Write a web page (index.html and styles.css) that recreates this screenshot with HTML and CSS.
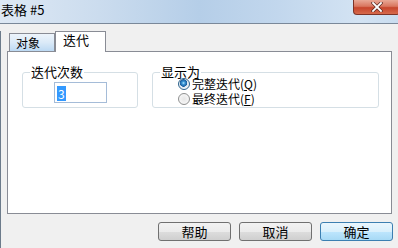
FILE: index.html
```html
<!DOCTYPE html>
<html lang="zh-CN">
<head>
  <meta charset="UTF-8" />
  <title>表格 #5</title>
  <link rel="stylesheet" href="styles.css">
</head>
<body>
  <div class="titlebar">
    <span class="title">表格 #5</span>
    <span class="close">
      <svg width="12" height="10" viewBox="0 0 12 10">
        <path d="M2 1 L10 9 M10 1 L2 9" stroke="#5a2a22" stroke-width="3.2" stroke-linecap="square" />
        <path d="M2 1 L10 9 M10 1 L2 9" stroke="#fff" stroke-width="1.8" stroke-linecap="square" />
      </svg>
    </span>
  </div>

  <div class="client">
    <div class="tabs">
      <div class="tab">对象</div>
      <div class="tab active">迭代</div>
    </div>

    <div class="panel">
      <fieldset class="group group-count">
        <legend>迭代次数</legend>
        <div class="group-body">
          <div class="field"><span class="sel">3</span></div>
        </div>
      </fieldset>

      <fieldset class="group group-show">
        <legend>显示为</legend>
        <div class="group-body">
          <label class="radio"><span class="dot checked"></span>完整迭代(<u>Q</u>)</label>
          <label class="radio"><span class="dot"></span>最终迭代(<u>F</u>)</label>
        </div>
      </fieldset>
    </div>

    <div class="buttons">
      <button class="btn">帮助</button>
      <button class="btn">取消</button>
      <button class="btn btn-default">确定</button>
    </div>
  </div>
</body>
</html>
```

FILE: styles.css
```css
body {
  margin: 0;
  width: 398px;
  height: 248px;
  overflow: hidden;
  background: #f0f0f0;
  font-family: "Noto Sans CJK SC", "DejaVu Sans", sans-serif;
  font-size: 12px;
  color: #000;
}
.titlebar {
  display: flex;
  justify-content: space-between;
  align-items: flex-start;
  height: 23px;
  border-bottom: 1px solid #7a8899;
  background: linear-gradient(to right, #dde8f4 0%, #cbdcee 25%, #b5cee8 50%, #c2d7ed 70%, #d3e3f3 90%, #c9dcef 100%);
}
.title {
  padding-left: 1px;
  line-height: 20px;
  font-size: 13px;
}
.close {
  display: flex;
  align-items: center;
  justify-content: center;
  width: 45px;
  height: 14px;
  margin-right: -2px;
  border: 1px solid #7d3327;
  border-top: 0;
  border-radius: 0 0 4px 4px;
  background: linear-gradient(#e9a896 0%, #d9765f 45%, #c7452c 55%, #d66a4c 100%);
}
.client {
  border-left: 1px solid #6c7b8b;
  height: 224px;
}
.tabs {
  display: flex;
  align-items: flex-end;
  margin-top: 7px;
  margin-left: 8px;
  height: 20px;
}
.tab {
  box-sizing: border-box;
  width: 46px;
  height: 18px;
  padding-left: 6px;
  line-height: 18px;
  border: 1px solid #898c95;
  border-bottom: 0;
  background: linear-gradient(#edf4fb 0%, #dbeaf8 50%, #bcd9f3 100%);
}
.tab.active {
  position: relative;
  width: 51px;
  height: 21px;
  margin-bottom: -1px;
  padding-left: 7px;
  line-height: 16px;
  font-size: 13px;
  background: #fff;
}
.panel {
  display: flex;
  align-items: flex-start;
  gap: 14px;
  box-sizing: border-box;
  width: 385px;
  height: 163px;
  margin-left: 6px;
  padding: 13px 0 0 14px;
  border: 1px solid #898c95;
  background: #fff;
}
.group {
  box-sizing: border-box;
  margin: 0;
  padding: 0;
  min-width: 0;
  border: 1px solid #d5dfe5;
  border-radius: 3px;
}
.group legend {
  margin-left: 7px;
  padding: 0 1px;
  line-height: 14px;
  font-size: 13px;
}
.group-count {
  width: 116px;
}
.group-count .group-body {
  padding: 3px 0 4px 31px;
}
.field {
  box-sizing: border-box;
  width: 53px;
  height: 21px;
  padding: 2px 0 0 2px;
  border: 1px solid #a5bcd8;
  background: #fff;
}
.sel {
  display: inline-block;
  height: 15px;
  padding: 0 1px;
  line-height: 15px;
  background: #3399ff;
  color: #fff;
}
.group-show {
  width: 227px;
}
.group-show .group-body {
  margin-top: -3px;
  padding: 0 0 1px 25px;
}
.radio {
  display: flex;
  align-items: center;
  height: 15px;
  line-height: 14px;
  font-size: 12px;
}
.radio u {
  text-underline-offset: 1px;
}
.dot {
  box-sizing: border-box;
  flex: none;
  width: 12px;
  height: 12px;
  margin-right: 2px;
  border: 1px solid #8e8f8f;
  border-radius: 50%;
  background: radial-gradient(circle, #e6e6e6 0, #f6f6f6 5px);
}
.dot.checked {
  border-color: #2c628b;
  background: radial-gradient(circle at 45% 40%, #b6ecff 0, #3a95d6 1.5px, #1b5d9c 3.5px, #dfe9f1 4px, #f4f7fa 6px);
}
.buttons {
  display: flex;
  justify-content: flex-end;
  gap: 8px;
  margin-top: 8px;
  padding-right: 5px;
}
.btn {
  width: 73px;
  height: 19px;
  padding: 0;
  border: 1px solid #707070;
  border-radius: 3px;
  font-family: inherit;
  font-size: 13px;
  line-height: 15px;
  color: #000;
  background: linear-gradient(#f2f2f2 0%, #ebebeb 50%, #dddddd 51%, #cfcfcf 100%);
}
.btn-default {
  border-color: #3c7fb1;
  background: linear-gradient(#eaf6fd 0%, #d9f0fc 50%, #bee6fd 51%, #a7d9f5 100%);
}
```
